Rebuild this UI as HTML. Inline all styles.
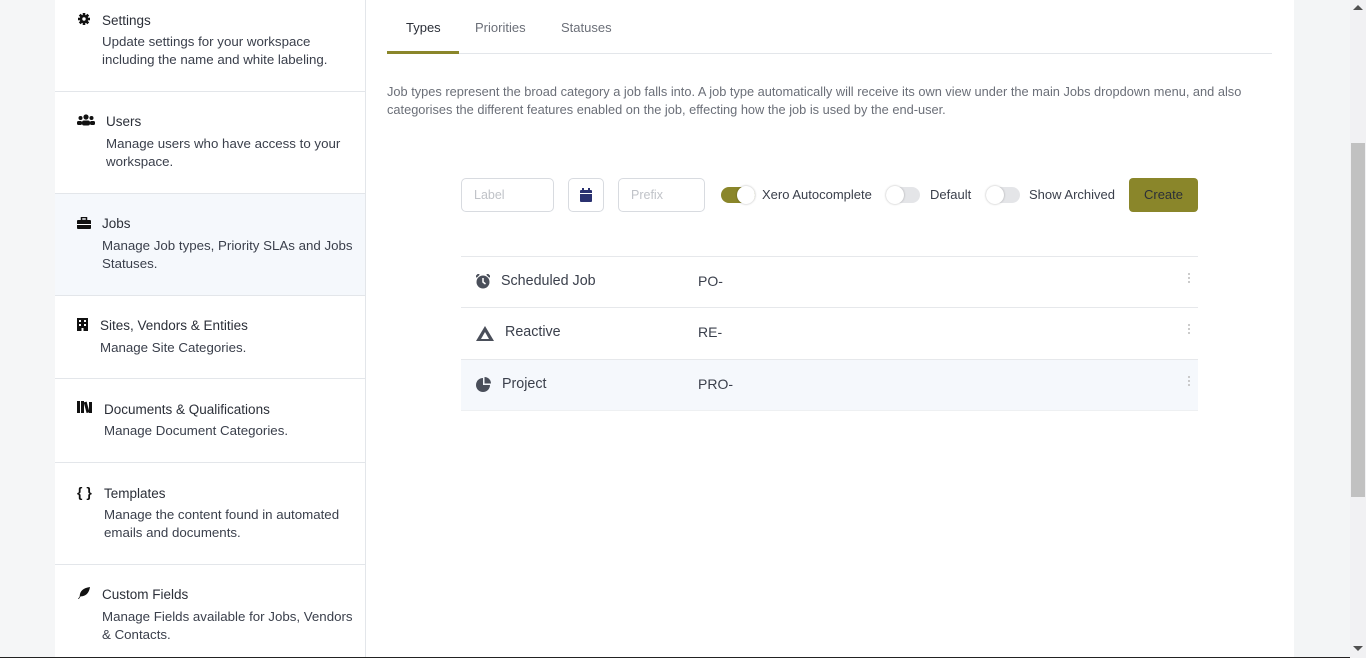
<!DOCTYPE html>
<html><head><meta charset="utf-8"><style>
*{box-sizing:border-box;margin:0;padding:0}
body{width:1366px;height:658px;overflow:hidden;background:#f3f5f6;font-family:"Liberation Sans",sans-serif;color:#3a3f4b;position:relative}
.left{position:absolute;left:0;top:0;width:55px;height:658px;background:#f5f6f7}
.side{position:absolute;left:55px;top:0;width:311px;height:658px;background:#fff;border-right:1px solid #e3e6ea}
.item{position:absolute;left:0;width:310px;border-bottom:1px solid #e3e6ea}
.item .t{position:absolute;font-size:13.5px;color:#2b2f38}
.item .d{position:absolute;font-size:13.3px;line-height:18px;color:#3a3f4b;white-space:nowrap}
.ic{position:absolute;width:14px;height:12px}
.main{position:absolute;left:366px;top:0;width:928px;height:658px;background:#fff}
.sb{position:absolute;left:1350px;top:0;width:16px;height:658px;background:#f1f1f3}
.thumb{position:absolute;left:1351px;top:143px;width:14px;height:354px;background:#c1c1c1}
.tab{position:absolute;top:20px;font-size:13px;color:#6b6f78}
.inp{position:absolute;top:178px;height:34px;border:1px solid #d8dbe0;border-radius:5px;font-size:12.5px;color:#c0c3c8;padding:9px 12px}
.tog{position:absolute;top:187px;width:34px;height:16px;border-radius:8px;background:#e4e5e8}
.tog i{position:absolute;top:-1px;width:18px;height:18px;border-radius:50%;background:#fff;box-shadow:0 0 2px rgba(0,0,0,.3)}
.lab{position:absolute;top:187px;font-size:13px;color:#3a3f4b}
.row{position:absolute;left:461px;width:737px;height:51px;border-top:1px solid #e6e8eb}
.row .n{position:absolute;left:40px;top:16px;font-size:14.3px;color:#3a3f4b}
.row .p{position:absolute;left:237px;top:16px;font-size:14px;color:#3a3f4b}
.row .k{position:absolute;left:727px;top:15px;width:2px;height:12px;background:radial-gradient(circle,#bbb 1px,transparent 1px) 0 0/2px 4px}
</style></head><body>
<div class="left"></div>
<div class="side">
 <div class="item" style="top:0;height:92px">
  <svg class="ic" style="left:22px;top:13px" viewBox="0 0 14 14"><circle cx="7" cy="7" r="5" fill="#111"/><g stroke="#111" stroke-width="3"><line x1="7" y1="0" x2="7" y2="14"/><line x1="0" y1="7" x2="14" y2="7"/><line x1="2" y1="2" x2="12" y2="12"/><line x1="12" y1="2" x2="2" y2="12"/></g><circle cx="7" cy="7" r="2" fill="#fff"/></svg>
  <div class="t" style="left:47px;top:13px">Settings</div>
  <div class="d" style="left:47px;top:33px">Update settings for your workspace<br>including the name and white labeling.</div></div>
 <div class="item" style="top:92px;height:102px">
  <svg class="ic" style="left:22px;top:22px;width:18px" viewBox="0 0 18 12"><circle cx="9" cy="3" r="2.6" fill="#111"/><circle cx="3.5" cy="4" r="2" fill="#111"/><circle cx="14.5" cy="4" r="2" fill="#111"/><rect x="5" y="6.5" width="8" height="5" rx="2" fill="#111"/><rect x="0" y="7" width="5" height="4" rx="1.5" fill="#111"/><rect x="13" y="7" width="5" height="4" rx="1.5" fill="#111"/></svg>
  <div class="t" style="left:51px;top:22px">Users</div>
  <div class="d" style="left:51px;top:43px">Manage users who have access to your<br>workspace.</div></div>
 <div class="item" style="top:194px;height:102px;background:#f5f8fc">
  <svg class="ic" style="left:22px;top:23px" viewBox="0 0 14 12"><rect x="4.5" y="0.5" width="5" height="3" fill="none" stroke="#111" stroke-width="1.5"/><rect x="0" y="3" width="14" height="9" rx="1" fill="#111"/><rect x="0" y="7" width="14" height="1" fill="#fff"/></svg>
  <div class="t" style="left:47px;top:22px">Jobs</div>
  <div class="d" style="left:47px;top:43px">Manage Job types, Priority SLAs and Jobs<br>Statuses.</div></div>
 <div class="item" style="top:296px;height:83px">
  <svg class="ic" style="left:22px;top:22px;width:11px;height:13px" viewBox="0 0 11 13"><rect width="11" height="13" fill="#111"/><g fill="#fff"><rect x="2" y="2" width="2" height="2"/><rect x="7" y="2" width="2" height="2"/><rect x="2" y="6" width="2" height="2"/><rect x="7" y="6" width="2" height="2"/><rect x="4.5" y="10" width="2" height="3"/></g></svg>
  <div class="t" style="left:45px;top:22px">Sites, Vendors &amp; Entities</div>
  <div class="d" style="left:45px;top:43px">Manage Site Categories.</div></div>
 <div class="item" style="top:379px;height:84px">
  <svg class="ic" style="left:22px;top:22px;width:16px" viewBox="0 0 16 12"><rect x="0" y="0" width="3" height="12" fill="#111"/><rect x="4" y="0" width="3" height="12" fill="#111"/><rect x="8" y="1" width="3" height="11" fill="#111" transform="rotate(-15 9 6)"/><rect x="12" y="1" width="3" height="11" fill="#111"/></svg>
  <div class="t" style="left:49px;top:23px">Documents &amp; Qualifications</div>
  <div class="d" style="left:49px;top:43px">Manage Document Categories.</div></div>
 <div class="item" style="top:463px;height:102px">
  <div style="position:absolute;left:22px;top:21px;font-size:14px;font-weight:bold;color:#111">{ }</div>
  <div class="t" style="left:49px;top:23px">Templates</div>
  <div class="d" style="left:49px;top:43px">Manage the content found in automated<br>emails and documents.</div></div>
 <div class="item" style="top:565px;height:93px;border-bottom:none">
  <svg class="ic" style="left:22px;top:22px" viewBox="0 0 14 14"><path d="M0 14 L2 11 C2 5 6 1 14 0 C13 7 9 11 3 11 L1 14 Z" fill="#111"/></svg>
  <div class="t" style="left:47px;top:22px">Custom Fields</div>
  <div class="d" style="left:47px;top:43px">Manage Fields available for Jobs, Vendors<br>&amp; Contacts.</div></div>
</div>
<div class="main"></div>
<div style="position:absolute;left:387px;top:53px;width:885px;height:1px;background:#e3e6ea"></div>
<div style="position:absolute;left:387px;top:51px;width:72px;height:3px;background:#8a862a"></div>
<div class="tab" style="left:406px;color:#2b2f38">Types</div>
<div class="tab" style="left:475px">Priorities</div>
<div class="tab" style="left:561px">Statuses</div>
<div style="position:absolute;left:387px;top:83px;width:900px;font-size:12.8px;line-height:18px;color:#6b6f78">Job types represent the broad category a job falls into. A job type automatically will receive its own view under the main Jobs dropdown menu, and also<br>categorises the different features enabled on the job, effecting how the job is used by the end-user.</div>
<div class="inp" style="left:461px;width:93px">Label</div>
<div class="inp" style="left:568px;width:36px"><svg style="position:absolute;left:11px;top:9px" width="12" height="14" viewBox="0 0 12 14"><rect y="2" width="12" height="12" rx="1" fill="#2a3170"/><rect x="2" y="0" width="2" height="3" fill="#2a3170"/><rect x="8" y="0" width="2" height="3" fill="#2a3170"/><rect y="5" width="12" height="1" fill="#fff"/></svg></div>
<div class="inp" style="left:618px;width:87px">Prefix</div>
<div class="tog" style="left:721px;background:#8a862a"><i style="left:16px"></i></div>
<div class="lab" style="left:762px">Xero Autocomplete</div>
<div class="tog" style="left:886px"><i style="left:0"></i></div>
<div class="lab" style="left:930px">Default</div>
<div class="tog" style="left:986px"><i style="left:0"></i></div>
<div class="lab" style="left:1029px">Show Archived</div>
<div style="position:absolute;left:1129px;top:178px;width:69px;height:34px;background:#8a862a;border-radius:4px;color:#2b2f38;font-size:13px;text-align:center;line-height:34px">Create</div>
<div class="row" style="top:256px"><svg style="position:absolute;left:15px;top:17px" width="14" height="15" viewBox="0 0 14 15"><circle cx="7" cy="8" r="6.5" fill="#4a4f5a"/><path d="M7 4 V8 L9.5 10" stroke="#fff" stroke-width="1.5" fill="none"/><path d="M0 3 L3 0 M14 3 L11 0" stroke="#4a4f5a" stroke-width="2"/></svg><div class="n">Scheduled Job</div><div class="p">PO-</div><div class="k"></div></div>
<div class="row" style="top:307px"><svg style="position:absolute;left:15px;top:18px" width="18" height="15" viewBox="0 0 18 15"><path d="M9 0 L18 15 L0 15 Z" fill="#4a4f5a"/><path d="M9 6 L13 13 L5 13Z" fill="#fff"/></svg><div class="n" style="left:44px">Reactive</div><div class="p">RE-</div><div class="k"></div></div>
<div class="row" style="top:359px;background:#f5f8fc"><svg style="position:absolute;left:15px;top:17px" width="15" height="15" viewBox="0 0 15 15"><path d="M7 1 A7 7 0 1 0 14 8 L7 8Z" fill="#4a4f5a"/><path d="M8.5 0 A6.5 6.5 0 0 1 15 6.5 L8.5 6.5Z" fill="#4a4f5a"/></svg><div class="n" style="left:41px">Project</div><div class="p">PRO-</div><div class="k"></div></div>
<div style="position:absolute;left:461px;top:410px;width:737px;height:1px;background:#eef0f2"></div>
<div class="sb"></div><div class="thumb"></div>
<div style="position:absolute;left:1353px;top:5px;width:0;height:0;border-left:5px solid transparent;border-right:5px solid transparent;border-bottom:5px solid #505050"></div>
<div style="position:absolute;left:1353px;top:646px;width:0;height:0;border-left:5px solid transparent;border-right:5px solid transparent;border-top:5px solid #505050"></div>
<div style="position:absolute;left:0;top:657px;width:1350px;height:1px;background:#222"></div>
</body></html>
